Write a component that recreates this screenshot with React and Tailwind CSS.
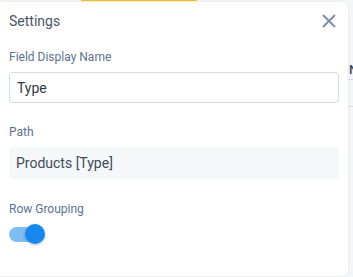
import React, { useState } from 'react';

const App = () => {
  const [grouping, setGrouping] = useState(true);

  return (
    <div className="w-[353px] h-[277px] bg-[#f4f5f7] flex flex-col overflow-hidden" style={{ fontFamily: 'Roboto, sans-serif' }}>
      {/* top strip with active tab marker */}
      <div className="h-[2px] flex shrink-0">
        <div className="w-[81px]" />
        <div className="w-[116px] h-[1px] bg-[#f5bf1c]" />
      </div>

      <div className="flex flex-1 min-h-0">
        {/* Settings panel */}
        <div className="w-[348px] h-[274px] bg-white rounded-r-md shadow-[0_0_3px_rgba(0,0,0,0.08)] px-[9px] flex flex-col">
          <div className="flex items-center justify-between h-[37px] pt-[1px]">
            <h2 className="text-[14px] text-[#4a5568]">Settings</h2>
            <button className="mr-[2px] text-[#7d92aa]">
              <svg width="16" height="16" viewBox="0 0 16 16" fill="none" stroke="currentColor" strokeWidth="2">
                <path d="M2 2 L14 14 M14 2 L2 14" />
              </svg>
            </button>
          </div>

          <label className="mt-[11px] text-[12px] leading-[14px] text-[#5b7291]">Field Display Name</label>
          <input
            defaultValue="Type"
            className="mt-[8px] h-[31px] w-[330px] border border-[#d3dbe5] rounded-[3px] px-[7px] text-[14px] text-[#333b45] outline-none"
          />

          <label className="mt-[22px] text-[12px] leading-[14px] text-[#5b7291]">Path</label>
          <div className="mt-[8px] h-[32px] w-[330px] bg-[#f6f7f9] rounded-[3px] px-[7px] flex items-center text-[14px] text-[#3f4a5a]">
            Products [Type]
          </div>

          <label className="mt-[23px] text-[12px] leading-[14px] text-[#5b7291]">Row Grouping</label>
          <button
            onClick={() => setGrouping(!grouping)}
            className="mt-[7px] relative w-[37px] h-[22px] flex items-center"
          >
            <span className={`w-[31px] h-[15px] rounded-full ${grouping ? 'bg-[#7fbdf5]' : 'bg-[#cbd2db]'}`} />
            <span
              className={`absolute top-[1px] w-[20px] h-[20px] rounded-full shadow-[0_1px_3px_rgba(0,0,0,0.25)] ${grouping ? 'left-[16px] bg-[#1788ee]' : 'left-0 bg-white'}`}
            />
          </button>
        </div>

        {/* background content peeking through */}
        <div className="flex-1 flex flex-col pt-[57px]">
          <div className="h-[20px] flex items-center">
            <span className="text-[13px] font-medium text-[#3c4b5e] pl-[1px] leading-none">N</span>
          </div>
          <div className="h-[1px] bg-[#d6dbe1]" />
          <div className="h-[26px]" />
          <div className="h-[1px] bg-[#d6dbe1]" />
        </div>
      </div>
    </div>
  );
};

export default App;
